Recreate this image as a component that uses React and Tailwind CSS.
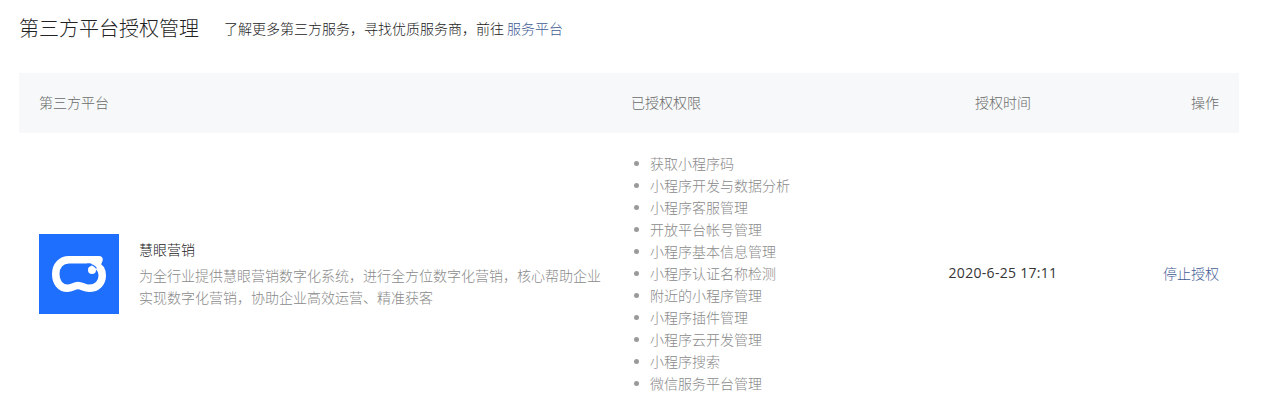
const perms = ["获取小程序码","小程序开发与数据分析","小程序客服管理","开放平台帐号管理","小程序基本信息管理","小程序认证名称检测","附近的小程序管理","小程序插件管理","小程序云开发管理","小程序搜索","微信服务平台管理"];

function Logo() {
  return (
    <div className="w-20 h-20 shrink-0 mt-[2px] bg-[#1f6fff] flex items-center justify-center">
      <svg width="54" height="36" viewBox="0 0 54 36" fill="none">
        <path d="M17 3.75H47C46.5 6 45 7.5 43 8.5C47.5 10.5 50.25 14.5 50.25 19.5C50.25 27 45 32.25 37 32.25C32 32.25 30 29.5 26 29.5C22 29.5 20 32.25 15.5 32.25C8 32.25 3.75 26 3.75 18C3.75 9.5 9 3.75 17 3.75Z" stroke="#fff" strokeWidth="7.5" strokeLinejoin="round" />
        <circle cx="40" cy="14" r="4" fill="#fff" />
        <path d="M35 8.2C38.5 7.8 42 9.2 44.5 12.5" stroke="#1f6fff" strokeWidth="1.2" fill="none" />
      </svg>
    </div>
  );
}

export default function App() {
  return (
    <div className="w-[1261px] h-[415px] overflow-hidden bg-white pl-[19px] pr-[22px] font-['Noto_Sans_CJK_SC','Microsoft_YaHei',sans-serif] text-sm text-[#353535]">
      <div className="flex items-center h-[55px]">
        <h1 className="text-[20px] font-light leading-7 text-[#222222]">第三方平台授权管理</h1>
        <p className="ml-[25px] text-sm font-light leading-5 mt-[1px] text-[#222222]">
          了解更多第三方服务，寻找优质服务商，前往 <a className="text-[#3f5c94]">服务平台</a>
        </p>
      </div>
      <div className="mt-[18px] flex h-[60px] items-center bg-[#f6f8f9] text-sm font-light text-[#6a6a6a] pb-[2px]">
        <div className="flex-1 pl-5">第三方平台</div>
        <div className="w-[300px] pl-5">已授权权限</div>
        <div className="w-[184px] text-center">授权时间</div>
        <div className="w-[144px] pr-5 text-right">操作</div>
      </div>
      <div className="flex items-center pt-[19px] text-sm font-light">
        <div className="flex-1 min-w-0 flex items-center pl-5 pr-2">
          <Logo />
          <div className="ml-5 min-w-0">
            <div className="leading-[22px] text-[#222222]">慧眼营销</div>
            <p className="mt-1 leading-[22px] text-[#8a8a8a]">为全行业提供慧眼营销数字化系统，进行全方位数字化营销，核心帮助企业实现数字化营销，协助企业高效运营、精准获客</p>
          </div>
        </div>
        <ul className="w-[300px] pl-5 text-[#8a8a8a]">
          {perms.map((p) => (
            <li key={p} className="flex items-center h-[22px]">
              <span className="w-[5px] h-[5px] rounded-full bg-[#9a9a9a] ml-[3px] mr-[11px]" />
              {p}
            </li>
          ))}
        </ul>
        <div className="w-[184px] text-center font-['Open_Sans','Noto_Sans_CJK_SC',sans-serif] font-normal tracking-[0.3px] text-[#353535]">2020-6-25 17:11</div>
        <div className="w-[144px] pr-5 text-right text-[#3f5c94]">停止授权</div>
      </div>
    </div>
  );
}
